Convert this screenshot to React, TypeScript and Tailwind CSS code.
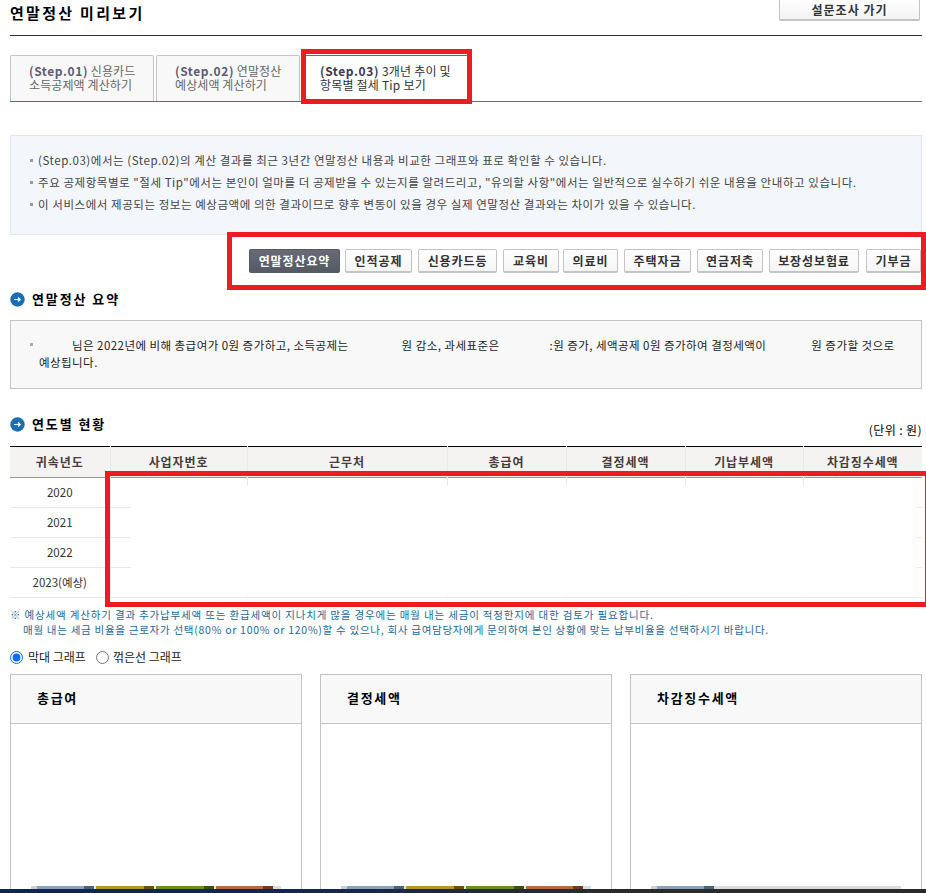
const tabs = [
  { step: '(Step.01)', line1: '신용카드', line2: '소득공제액 계산하기' },
  { step: '(Step.02)', line1: '연말정산', line2: '예상세액 계산하기' },
];

const filters = [
  { label: '연말정산요약', className: 'w-[91px] border-[#555a63] bg-gradient-to-b from-[#666b75] to-[#555a64] text-white' },
  { label: '인적공제', className: 'w-[67px] ml-[5px] border-[#c4c4c4] bg-gradient-to-b from-white to-[#f5f5f5] text-[#333]' },
  { label: '신용카드등', className: 'w-[79px] ml-[6px] border-[#c4c4c4] bg-gradient-to-b from-white to-[#f5f5f5] text-[#333]' },
  { label: '교육비', className: 'w-[56px] ml-[6px] border-[#c4c4c4] bg-gradient-to-b from-white to-[#f5f5f5] text-[#333]' },
  { label: '의료비', className: 'w-[55px] ml-[4px] border-[#c4c4c4] bg-gradient-to-b from-white to-[#f5f5f5] text-[#333]' },
  { label: '주택자금', className: 'w-[67px] ml-[6px] border-[#c4c4c4] bg-gradient-to-b from-white to-[#f5f5f5] text-[#333]' },
  { label: '연금저축', className: 'w-[66px] ml-[6px] border-[#c4c4c4] bg-gradient-to-b from-white to-[#f5f5f5] text-[#333]' },
  { label: '보장성보험료', className: 'w-[90px] ml-[6px] border-[#c4c4c4] bg-gradient-to-b from-white to-[#f5f5f5] text-[#333]' },
  { label: '기부금', className: 'w-[55px] ml-[7px] border-[#c4c4c4] bg-gradient-to-b from-white to-[#f5f5f5] text-[#333]' },
];

const columns = [
  { label: '귀속년도', className: 'w-[100px]' },
  { label: '사업자번호', className: 'w-[137px]' },
  { label: '근무처', className: 'w-[200px]' },
  { label: '총급여', className: 'w-[119px]' },
  { label: '결정세액', className: 'w-[119px]' },
  { label: '기납부세액', className: 'w-[118px]' },
  { label: '차감징수세액', className: 'w-[119px]' },
];

const years = ['2020', '2021', '2022', '2023(예상)'];

function SectionTitle({ children }: { children: string }) {
  return (
    <div className="flex items-center gap-[7px] h-[16px]">
      <svg width="15" height="15" viewBox="0 0 15 15" className="shrink-0">
        <circle cx="7.5" cy="7.5" r="7.2" fill="#1b6cb0" />
        <path d="M4 7.5h6M8 5.5l2.2 2-2.2 2" fill="none" stroke="#fff" strokeWidth="1.2" />
      </svg>
      <h2 className="text-[13px] font-bold text-black tracking-[1.9px]">{children}</h2>
    </div>
  );
}

function ChartCard({ title, partial, className }: { title: string; partial?: boolean; className: string }) {
  return (
    <div className={`w-[292px] h-[215px] border border-b-0 border-[#c4c4c4] flex flex-col ${className}`}>
      <div className="h-[49px] shrink-0 bg-[#f8f8f8] border-b border-[#c4c4c4] pl-[26px] pb-[2px] flex items-center text-[13px] font-bold text-black tracking-[1.7px]">
        {title}
      </div>
      <div className="mt-auto mx-[20px] h-[3px] flex bg-[#dcdcdc]">
        <div className="w-[6px] bg-[#d0d0d0]" />
        <div className="w-[47px] bg-[#8aa4bb]" />
        <div className="w-[10px] bg-[#4a6480]" />
        {!partial && (
          <>
            <div className="w-[2px] bg-[#e8e8e8]" />
            <div className="w-[48px] bg-[#b8962a]" />
            <div className="w-[10px] bg-[#6b5213]" />
            <div className="w-[2px] bg-[#e8e8e8]" />
            <div className="w-[48px] bg-[#6e8f1e]" />
            <div className="w-[10px] bg-[#3d5210]" />
            <div className="w-[2px] bg-[#e8e8e8]" />
            <div className="w-[47px] bg-[#b36b42]" />
            <div className="w-[10px] bg-[#6f3a1e]" />
          </>
        )}
      </div>
    </div>
  );
}

export default function App() {
  return (
    <div className="relative w-[926px] h-[893px] overflow-hidden bg-white text-[12px] text-[#333] font-['Noto_Sans_CJK_KR',sans-serif]">
      <div className="pl-[10px] pr-[4px]">
        {/* Title */}
        <div className="h-[36px] border-b border-[#333] flex justify-between">
          <h1 className="mt-[3px] text-[15px] leading-[20px] font-bold text-black tracking-[2.3px]">연말정산 미리보기</h1>
          <button className="w-[141px] h-[22px] -mt-[1px] mr-[2px] border border-[#c4c4c4] border-b-2 rounded-[2px] bg-gradient-to-b from-white to-[#f3f3f3] text-[12px] font-bold text-[#333] tracking-[1px]">
            설문조사 가기
          </button>
        </div>

        {/* Step tabs */}
        <div className="mt-[19px] h-[47px] flex border-b border-[#4a6fa5]">
          {tabs.map((tab) => (
            <div
              key={tab.step}
              className="w-[144px] h-[46px] mr-[2px] pl-[18px] pt-[8px] border border-b-0 border-[#c4c4c4] rounded-t-[2px] bg-[#f8f8f8] leading-[14px] text-[#666] tracking-[0.1px]"
            >
              <div>
                <b className="text-[#5f5a75] tracking-[0.6px]">{tab.step}</b> {tab.line1}
              </div>
              <div>{tab.line2}</div>
            </div>
          ))}
          <div className="w-[168px] h-[47px] pl-[18px] pt-[8px] bg-white border-t border-[#4a6fa5] leading-[14px] text-[#333] tracking-[0.2px]">
            <div>
              <b className="text-[#3d3650] tracking-[0.6px]">(Step.03)</b> 3개년 추이 및
            </div>
            <div>항목별 절세 Tip 보기</div>
          </div>
        </div>

        {/* Notice */}
        <div className="mt-[33px] h-[100px] border border-[#e3e8f0] bg-[#f3f6fb] pl-[19px] pt-[13px] text-[11.5px] leading-[22px] text-[#444] tracking-[0.55px]">
          <div className="flex items-center gap-[5px]">
            <span className="w-[3px] h-[3px] bg-[#999]" />
            <span>(Step.03)에서는 (Step.02)의 계산 결과를 최근 3년간 연말정산 내용과 비교한 그래프와 표로 확인할 수 있습니다.</span>
          </div>
          <div className="flex items-center gap-[5px]">
            <span className="w-[3px] h-[3px] bg-[#999]" />
            <span>주요 공제항목별로 "절세 Tip"에서는 본인이 얼마를 더 공제받을 수 있는지를 알려드리고, "유의할 사항"에서는 일반적으로 실수하기 쉬운 내용을 안내하고 있습니다.</span>
          </div>
          <div className="flex items-center gap-[5px]">
            <span className="w-[3px] h-[3px] bg-[#999]" />
            <span>이 서비스에서 제공되는 정보는 예상금액에 의한 결과이므로 향후 변동이 있을 경우 실제 연말정산 결과와는 차이가 있을 수 있습니다.</span>
          </div>
        </div>

        {/* Filter buttons */}
        <div className="mt-[14px] flex justify-end pr-[1px]">
          {filters.map((item) => (
            <button
              key={item.label}
              className={`h-[24px] border border-b-2 rounded-[2px] text-[12px] font-bold tracking-[0.9px] ${item.className}`}
            >
              {item.label}
            </button>
          ))}
        </div>

        {/* Summary */}
        <div className="mt-[18px]">
          <SectionTitle>연말정산 요약</SectionTitle>
        </div>
        <div className="mt-[13px] h-[69px] border border-[#c4c4c4] bg-[#f8f8f8] pl-[19px] pr-[20px] pt-[16px] flex text-[11.5px] leading-[17px] text-[#222] tracking-[0.45px]">
          <span className="w-[3px] h-[3px] mt-[6px] mr-[6px] shrink-0 bg-[#aaa]" />
          <div>
            <div className="flex whitespace-pre">
              <span className="ml-[33px]">님은 2022년에 비해 총급여가 0원 증가하고, 소득공제는</span>
              <span className="ml-[53px]">원 감소, 과세표준은</span>
              <span className="ml-[50px]">:원 증가, 세액공제 0원 증가하여 결정세액이</span>
              <span className="ml-[45px]">원 증가할 것으로</span>
            </div>
            <div>예상됩니다.</div>
          </div>
        </div>

        {/* Yearly status */}
        <div className="mt-[27px] flex items-start justify-between">
          <SectionTitle>연도별 현황</SectionTitle>
          <span className="mt-[6px] text-[12px] leading-[16px] text-black tracking-[0.4px]">(단위 : 원)</span>
        </div>
        <table className="mt-[8px] w-[912px] table-fixed border-t-[1px] border-black border-collapse">
          <thead>
            <tr className="h-[31px] bg-[#f4f3f1] border-b border-[#999]">
              {columns.map((col, i) => (
                <th
                  key={col.label}
                  className={`${col.className} ${i > 0 ? 'border-l border-[#e9e9e9]' : ''} font-bold text-[12px] text-[#4a3a3a] tracking-[0.9px]`}
                >
                  {col.label}
                </th>
              ))}
            </tr>
          </thead>
          <tbody>
            {years.map((year) => (
              <tr key={year} className="h-[30px] border-b border-[#e9e9e9]">
                <td className="text-center text-[11.5px] text-[#333]">{year}</td>
                {columns.slice(1).map((col) => (
                  <td key={col.label} className="border-l border-[#e9e9e9]" />
                ))}
              </tr>
            ))}
          </tbody>
        </table>

        {/* Notes */}
        <div className="mt-[9px] text-[10.5px] leading-[15px] text-[#1a6a9a]">
          <p className="tracking-[0.84px]">※ 예상세액 계산하기 결과 추가납부세액 또는 환급세액이 지나치게 많을 경우에는 매월 내는 세금이 적정한지에 대한 검토가 필요합니다.</p>
          <p className="pl-[13px] tracking-[0.73px]">매월 내는 세금 비율을 근로자가 선택(80% or 100% or 120%)할 수 있으나, 회사 급여담당자에게 문의하여 본인 상황에 맞는 납부비율을 선택하시기 바랍니다.</p>
        </div>

        {/* Chart type */}
        <div className="mt-[12px] h-[16px] flex items-center text-[12px] text-[#222]">
          <input type="radio" name="chart" defaultChecked className="m-0 w-[13px] h-[13px] accent-[#0a6cff]" />
          <span className="ml-[5px]">막대 그래프</span>
          <input type="radio" name="chart" className="m-0 ml-[10px] w-[13px] h-[13px]" />
          <span className="ml-[4px]">꺾은선 그래프</span>
        </div>

        {/* Charts */}
        <div className="mt-[9px] flex">
          <ChartCard title="총급여" className="" />
          <ChartCard title="결정세액" className="ml-[18px]" />
          <ChartCard title="차감징수세액" partial className="ml-[18px]" />
        </div>
        <div className="h-[4px] -ml-[10px] -mr-[4px] bg-gradient-to-r from-[#10264f] from-30% to-[#2a2a2a] to-65%" />
      </div>

      {/* Annotation frames and masked table body */}
      <div className="absolute left-[131px] top-[486px] w-[785px] h-[110px] bg-white" />
      <div className="absolute left-[301px] top-[49px] w-[171px] h-[55px] border-[5px] border-[#ed1c24]" />
      <div className="absolute left-[227px] top-[232px] w-[699px] h-[58px] border-[5px] border-[#ed1c24]" />
      <div className="absolute left-[105px] top-[471px] w-[825px] h-[136px] border-[5px] border-[#ed1c24]" />
    </div>
  );
}
